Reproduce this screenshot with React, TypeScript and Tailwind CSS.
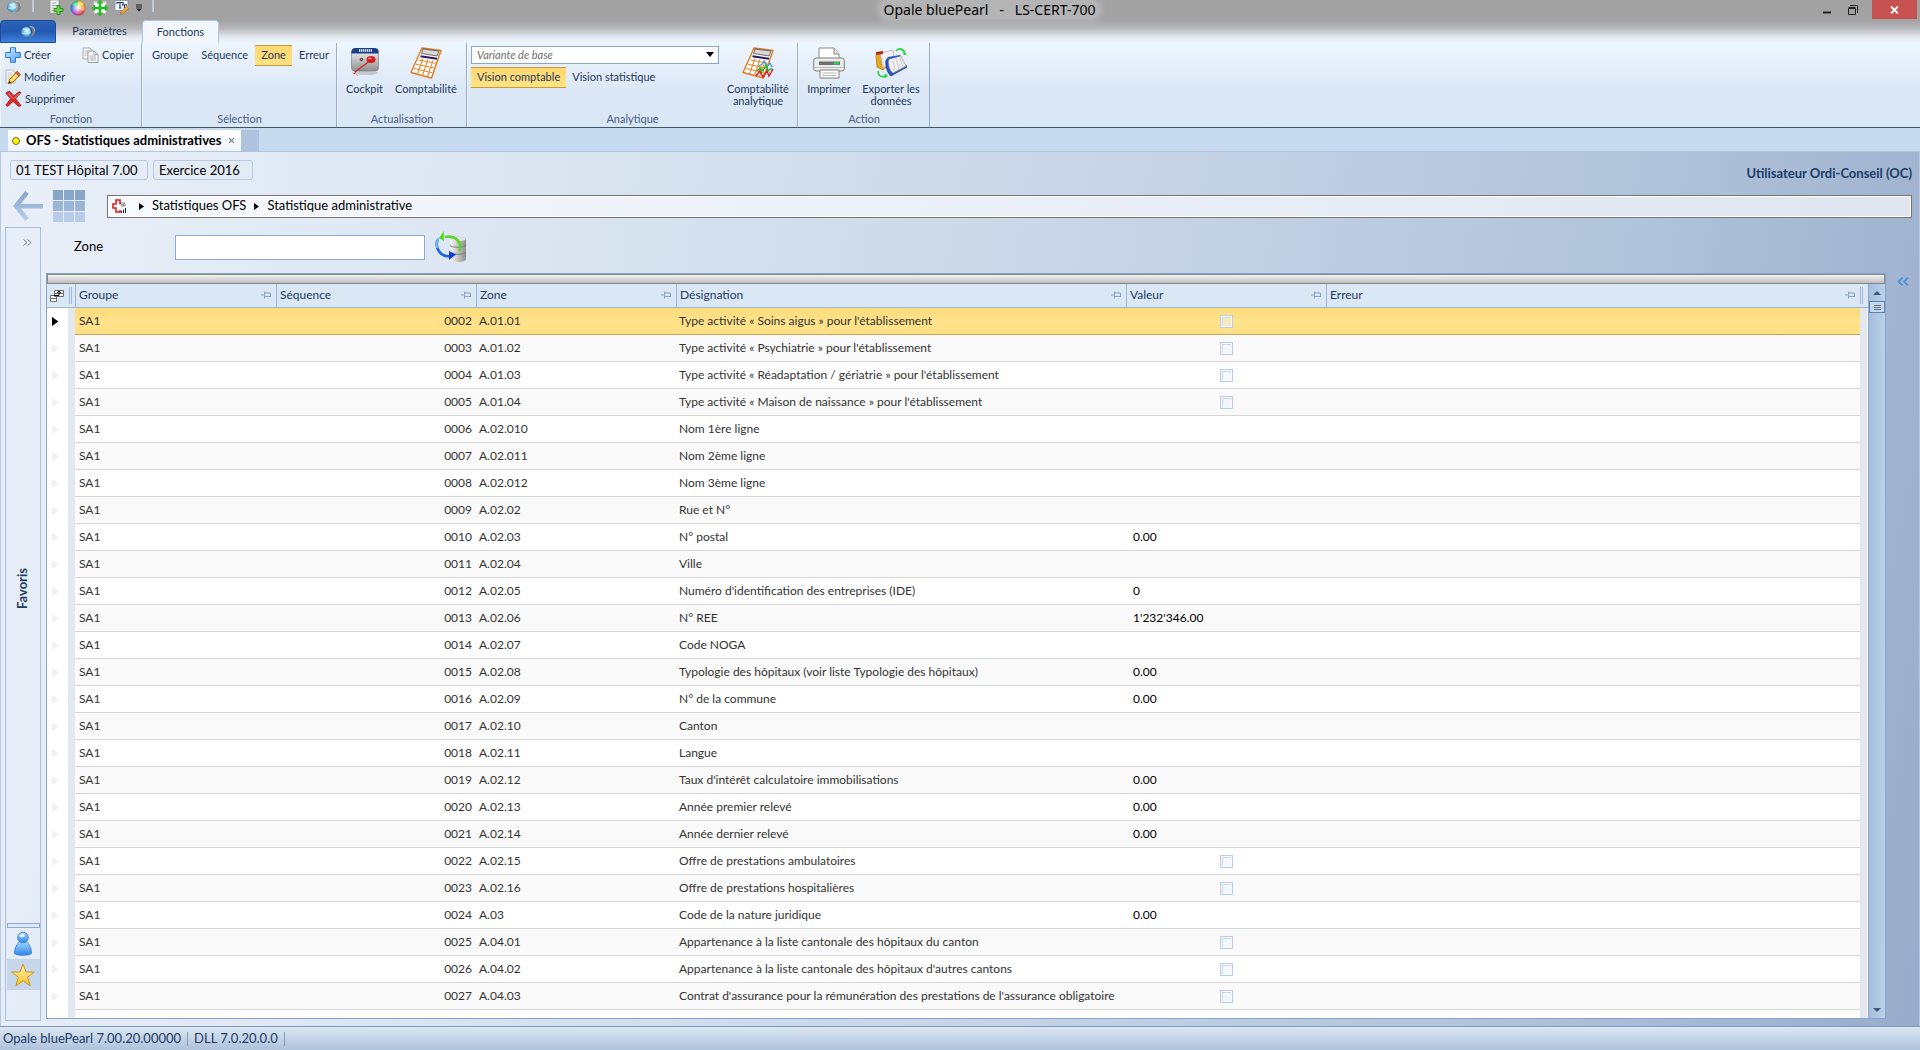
import React from 'react';

type Row = {
  seq: string;
  zone: string;
  label: string;
  value?: string;
  check?: boolean;
};

const rows: Row[] = [
  { seq: '0002', zone: 'A.01.01', label: "Type activité « Soins aigus » pour l'établissement", check: true },
  { seq: '0003', zone: 'A.01.02', label: "Type activité « Psychiatrie » pour l'établissement", check: true },
  { seq: '0004', zone: 'A.01.03', label: "Type activité « Réadaptation / gériatrie » pour l'établissement", check: true },
  { seq: '0005', zone: 'A.01.04', label: "Type activité « Maison de naissance » pour l'établissement", check: true },
  { seq: '0006', zone: 'A.02.010', label: 'Nom 1ère ligne' },
  { seq: '0007', zone: 'A.02.011', label: 'Nom 2ème ligne' },
  { seq: '0008', zone: 'A.02.012', label: 'Nom 3ème ligne' },
  { seq: '0009', zone: 'A.02.02', label: 'Rue et N°' },
  { seq: '0010', zone: 'A.02.03', label: 'N° postal', value: '0.00' },
  { seq: '0011', zone: 'A.02.04', label: 'Ville' },
  { seq: '0012', zone: 'A.02.05', label: "Numéro d'identification des entreprises (IDE)", value: '0' },
  { seq: '0013', zone: 'A.02.06', label: 'N° REE', value: "1'232'346.00" },
  { seq: '0014', zone: 'A.02.07', label: 'Code NOGA' },
  { seq: '0015', zone: 'A.02.08', label: 'Typologie des hôpitaux (voir liste Typologie des hôpitaux)', value: '0.00' },
  { seq: '0016', zone: 'A.02.09', label: 'N° de la commune', value: '0.00' },
  { seq: '0017', zone: 'A.02.10', label: 'Canton' },
  { seq: '0018', zone: 'A.02.11', label: 'Langue' },
  { seq: '0019', zone: 'A.02.12', label: "Taux d'intérêt calculatoire immobilisations", value: '0.00' },
  { seq: '0020', zone: 'A.02.13', label: 'Année premier relevé', value: '0.00' },
  { seq: '0021', zone: 'A.02.14', label: 'Année dernier relevé', value: '0.00' },
  { seq: '0022', zone: 'A.02.15', label: 'Offre de prestations ambulatoires', check: true },
  { seq: '0023', zone: 'A.02.16', label: 'Offre de prestations hospitalières', check: true },
  { seq: '0024', zone: 'A.03', label: 'Code de la nature juridique', value: '0.00' },
  { seq: '0025', zone: 'A.04.01', label: 'Appartenance à la liste cantonale des hôpitaux du canton', check: true },
  { seq: '0026', zone: 'A.04.02', label: "Appartenance à la liste cantonale des hôpitaux d'autres cantons", check: true },
  { seq: '0027', zone: 'A.04.03', label: "Contrat d'assurance pour la rémunération des prestations de l'assurance obligatoire", check: true },
];

const columns = ['Groupe', 'Séquence', 'Zone', 'Désignation', 'Valeur', 'Erreur'];

/* ---------- icons ---------- */

function PearlIcon() {
  return (
    <svg width="16" height="14" viewBox="0 0 16 14">
      <defs>
        <radialGradient id="pearl" cx="0.6" cy="0.4" r="0.6">
          <stop offset="0" stopColor="#e8fbff" />
          <stop offset="0.5" stopColor="#8fd3f2" />
          <stop offset="1" stopColor="#3a86c4" />
        </radialGradient>
      </defs>
      <path d="M9 1c4-.5 6.500 2.500 6 6-.4 3-3 5-6 5 2-1 3.500-2.800 3.500-5.500C12.500 4 11 2 9 1z" fill="#7d7f83" />
      <path d="M10 1.300c3-.2 5 2 4.700 5" fill="none" stroke="#c9cbd0" strokeWidth="0.700" />
      <circle cx="6" cy="7" r="5" fill="url(#pearl)" />
      <path d="M3 4l3 1 3-2M2 8l4 1 4-2" fill="none" stroke="#fff" strokeWidth="0.700" opacity="0.800" />
    </svg>
  );
}

function NewPageIcon() {
  return (
    <svg width="16" height="16" viewBox="0 0 16 16">
      <path d="M2 0h9v13H2z" fill="#fbfbfb" stroke="#8a8a8a" strokeWidth="0.800" />
      <path d="M3.500 3h5M3.500 5.500h6M3.500 8h4M3.500 10.500h3" stroke="#9a9a9a" />
      <path d="M9 5.500h3V8.500h3v3h-3v3H9v-3H6v-3h3z" fill="#6cd04a" stroke="#1f8a1a" strokeWidth="0.900" />
    </svg>
  );
}

function ColorWheelIcon() {
  return (
    <svg width="16" height="16" viewBox="0 0 16 16">
      <defs>
        <radialGradient id="wheel">
          <stop offset="0" stopColor="#fff" />
          <stop offset="1" stopColor="#fff" stopOpacity="0" />
        </radialGradient>
      </defs>
      <path d="M8 8V.5A7.500 7.500 0 0 1 14.500 4.200z" fill="#f5d33a" />
      <path d="M8 8l6.500-3.800a7.500 7.500 0 0 1 0 7.500z" fill="#f7943a" />
      <path d="M8 8l6.500 3.700A7.500 7.500 0 0 1 8 15.500z" fill="#ee3b55" />
      <path d="M8 8v7.500a7.500 7.500 0 0 1-6.500-3.800z" fill="#b344d8" />
      <path d="M8 8l-6.500 3.700a7.500 7.500 0 0 1 0-7.500z" fill="#3d7bf0" />
      <path d="M8 8L1.500 4.200A7.500 7.500 0 0 1 8 .5z" fill="#4fd07a" />
      <circle cx="8" cy="8" r="6.500" fill="url(#wheel)" />
      <circle cx="8" cy="8" r="7.300" fill="none" stroke="#666" strokeWidth="0.500" />
    </svg>
  );
}

function ExpandIcon() {
  return (
    <svg width="16" height="16" viewBox="0 0 16 16">
      <path d="M1.500 1.500h13v12h-13z" fill="#fff" stroke="#909090" strokeWidth="0.600" />
      <path d="M1.500 1.500h13v2h-13z" fill="#d9d9d9" />
      <path d="M8 0l3 3H9v4h4V5l3 3-3 3V9H9v4h2l-3 3-3-3h2V9H3v2L0 8l3-3v2h4V3H5z" fill="#1ecb1e" stroke="#0a8a0a" strokeWidth="0.400" />
    </svg>
  );
}

function FontEditIcon() {
  return (
    <svg width="16" height="16" viewBox="0 0 16 16">
      <path d="M1 .5h13v10H1z" fill="#f3f7fb" stroke="#7f90a8" strokeWidth="0.800" />
      <path d="M3 4V2.500h6V4M6 2.500V8M4.800 8h2.400M8.500 5.800V4.800h4v1M10.500 4.800V8" fill="none" stroke="#233c66" strokeWidth="1.100" />
      <path d="M6.500 14.500l1-3 5-5 2 2-5 5z" fill="#f2a73a" stroke="#9b5a10" strokeWidth="0.600" />
      <path d="M12.500 6.500l1-1 2 2-1 1z" fill="#e58b8b" />
    </svg>
  );
}

function PlusIcon() {
  return (
    <svg width="16" height="16" viewBox="0 0 16 16">
      <defs>
        <linearGradient id="plus" x1="0" y1="0" x2="1" y2="1">
          <stop offset="0" stopColor="#d5f0ff" />
          <stop offset="1" stopColor="#4d9ff0" />
        </linearGradient>
      </defs>
      <path d="M5.500.7h5v4.800h4.800v5h-4.800v4.800h-5v-4.800H.7v-5h4.800z" fill="url(#plus)" stroke="#2f78cf" />
    </svg>
  );
}

function CopyIcon() {
  return (
    <svg width="17" height="16" viewBox="0 0 17 16">
      <path d="M1 1h7l2 2v9H1z" fill="#f6f6f6" stroke="#a9adb2" />
      <path d="M2.500 4h4M2.500 6h4M2.500 8h4" stroke="#b9bcc0" />
      <path d="M6 4h6l4 3.500v8H6z" fill="#fbfbfb" stroke="#9ca0a6" />
      <path d="M12 4v3.500h4M8 9h6M8 11h6M8 13h6" fill="none" stroke="#a9adb2" />
    </svg>
  );
}

function EditIcon() {
  return (
    <svg width="16" height="16" viewBox="0 0 16 16">
      <path d="M1 1h7l2 2v11H1z" fill="#fafafa" stroke="#b6b6b6" />
      <path d="M2.500 4h5M2.500 6h5M2.500 8h4M2.500 10h3" stroke="#c2c2c2" />
      <path d="M3.500 14.500l1-4 6.500-7 3.500 3.200-7 7z" fill="#f7bf3c" stroke="#9a6414" strokeWidth="0.900" />
      <path d="M6 12l6.800-7" stroke="#fff0a8" strokeWidth="1.200" />
      <path d="M10.500 4l1.500-1.800 3.600 3.200-1.500 1.700z" fill="#e2674a" stroke="#9c3f22" strokeWidth="0.700" />
      <path d="M3.500 14.500l.6-2.400 1.800 1.700z" fill="#3a2a14" />
    </svg>
  );
}

function DeleteIcon() {
  return (
    <svg width="17" height="16" viewBox="0 0 17 16">
      <path d="M2 1l3-.5L8.500 5 14 .8l2 .8-5.500 6 5.500 7-2.200.8L8 10.500 2.500 15.500.8 14l5-6.300L1 2.500z" fill="#e02b2b" stroke="#9d1212" strokeWidth="0.800" />
      <path d="M3 2l5 5.500M9 7.500l5-5" stroke="#ff9a8e" strokeWidth="0.900" />
    </svg>
  );
}

function CockpitIcon() {
  return (
    <svg width="32" height="32" viewBox="0 0 32 32">
      <defs>
        <linearGradient id="cock" x1="0" y1="0" x2="0" y2="1">
          <stop offset="0" stopColor="#f4f4f4" />
          <stop offset="1" stopColor="#8f8f8f" />
        </linearGradient>
      </defs>
      <ellipse cx="16" cy="26" rx="13" ry="2" fill="#c3c8cf" />
      <rect x="2.500" y="2" width="27" height="22" rx="3" fill="url(#cock)" stroke="#777" strokeWidth="0.600" />
      <path d="M2.500 5a4 4 0 0 1 4-4h19a4 4 0 0 1 4 4v1.500h-27z" fill="#1c3f86" />
      <path d="M10 3.500h13" stroke="#dfe7f5" strokeWidth="2.600" strokeDasharray="1.400 0.600" />
      <circle cx="12.500" cy="12.500" r="1.800" fill="#555" />
      <circle cx="12.500" cy="12.500" r="0.700" fill="#ddd" />
      <path d="M22 13L6 25l-1 2" stroke="#d42222" strokeWidth="1.300" fill="none" />
      <path d="M5 25l4 4" stroke="#f1a0a0" />
      <ellipse cx="22" cy="12.500" rx="4.500" ry="3.600" fill="#d41c1c" />
      <ellipse cx="21" cy="11.500" rx="1.800" ry="1" fill="#f58080" />
    </svg>
  );
}

function CalculatorIcon({ chart }: { chart?: boolean }) {
  return (
    <svg width="32" height="32" viewBox="0 0 32 32">
      <path d="M12 1l19 2.500-9.500 27.500L1 25.500z" fill="#fff" stroke="#e07a1e" strokeWidth="1.400" strokeLinejoin="round" />
      <path d="M13 2l16 2-1.800 5L11.500 6.500z" fill="#d8d8d8" stroke="#4a4a4a" strokeWidth="0.800" />
      <path d="M10.500 9.200l16.500 2.600" stroke="#2a1660" strokeWidth="2" />
      <path d="M8.500 13l17 3.200M6 17.200l18 3.800M4 21.500l18.500 4.300M13 11.500L7.500 27M18 12.500L12.500 28.500M23 13.500L17.500 29.500" stroke="#e88a32" strokeWidth="1.100" />
      {chart && (
        <>
          <path d="M17 19l3-2 2-3 3 5 3-3 2 4" fill="none" stroke="#3da2e8" strokeWidth="1.300" />
          <path d="M15 24l3-3 3 3 3-6 2 6 4-3" fill="none" stroke="#1fb52a" strokeWidth="1.500" />
          <path d="M14 29l4-5 3 6 4-6 2 5 4-7" fill="none" stroke="#d81e1e" strokeWidth="1.500" />
        </>
      )}
    </svg>
  );
}

function PrinterIcon() {
  return (
    <svg width="32" height="32" viewBox="0 0 32 32">
      <path d="M6 13V1h15l5 6v6z" fill="#fff" stroke="#8a8a8a" />
      <path d="M21 1v6h5" fill="#e4e4e4" stroke="#8a8a8a" />
      <rect x="0.700" y="11" width="30.600" height="13" rx="2.500" fill="#ececec" stroke="#7f7f7f" />
      <rect x="6" y="14.500" width="21" height="3.500" fill="#6f6f6f" />
      <rect x="21" y="15" width="5" height="2.600" fill="#2fd04c" />
      <path d="M1 20.500h30" stroke="#bdbdbd" />
      <path d="M7 23h19v8H7z" fill="#fff" stroke="#7f7f7f" />
      <path d="M9.500 26h14M9.500 28.500h14" stroke="#b5b5b5" />
    </svg>
  );
}

function ExportIcon() {
  return (
    <svg width="32" height="32" viewBox="0 0 32 32">
      <path d="M1 8l5-3 1 13 4 2-3 3-6-3z" fill="#e9a91c" stroke="#a86d0a" strokeWidth="0.700" />
      <path d="M5 6l13-3 1 12-11 6z" fill="#f3f3f3" stroke="#a8a8a8" strokeWidth="0.700" />
      <path d="M1 5l7-1v3l-7 1z" fill="#b22a20" />
      <path d="M11 13l3-2 3 14 14-7 1 2-16 9c-4-3-6-11-5-16z" fill="#2d56c8" stroke="#1b3688" strokeWidth="0.700" />
      <path d="M14 12l12-3 5 10-13 7c-4-3-5-9-4-14z" fill="#efefef" stroke="#9c9c9c" strokeWidth="0.700" />
      <path d="M17 14c2 2 3 6 2 10M21 12l3 10M25 11l3 9" stroke="#c9c9c9" fill="none" />
      <path d="M11 13l15-4-1-1-12 2z" fill="#2d56c8" />
      <path d="M21 4c3-4 8-2 9 3" fill="none" stroke="#25d43c" strokeWidth="1.600" />
      <path d="M28.500 3v5h3z" fill="#25d43c" />
      <path d="M3 24c0 5 4 7 8 5" fill="none" stroke="#25d43c" strokeWidth="1.600" />
      <path d="M9.500 26.500l3.500 2-3.500 3z" fill="#25d43c" />
    </svg>
  );
}

function RefreshDbIcon() {
  return (
    <svg width="32" height="32" viewBox="0 0 32 32">
      <defs>
        <linearGradient id="db" x1="0" x2="1">
          <stop offset="0" stopColor="#fafafa" />
          <stop offset="1" stopColor="#8d8d8d" />
        </linearGradient>
      </defs>
      <path d="M15 8c0-3 16-3 16 0v20c0 4-16 4-16 0z" fill="url(#db)" />
      <path d="M15 14c0 3 16 3 16 0M15 21c0 3 16 3 16 0" fill="none" stroke="#7c7c7c" />
      <ellipse cx="23" cy="8" rx="8" ry="2.200" fill="#e2e2e2" />
      <path d="M24 20c4-8-3-16-14-14" fill="none" stroke="#5ad62b" strokeWidth="2.600" />
      <path d="M9 0v10L4 7z" fill="#5ad62b" />
      <path d="M2.500 9c-3 9 4 18 14 16" fill="none" stroke="#1b63e8" strokeWidth="2.600" />
      <path d="M3.500 7c-2 4-2.500 7-1 10" fill="none" stroke="#6fb8f8" strokeWidth="2" />
      <path d="M14 20l7 3.500-7 5.500z" fill="#0e3ddb" />
    </svg>
  );
}

function PinIcon() {
  return (
    <svg width="10" height="8" viewBox="0 0 10 8" fill="none" stroke="#8ba3c0">
      <path d="M0 4h3.500M3.500.5v7M4 2h5.500v4M4 5.500h5.500" />
    </svg>
  );
}

function HomeCrossIcon() {
  return (
    <svg width="15" height="15" viewBox="0 0 15 15">
      <path d="M9 4.500h-1V1H4v4H1v4h3v4h4v-2" fill="#fff" stroke="#e01b1b" strokeWidth="1.600" />
      <path d="M9 4h4M9 6h5M10 5v3M12 4v4" stroke="#777" strokeWidth="0.800" />
      <path d="M9.500 14v-2M11.500 14v-3.500M13.500 14V9" stroke="#222" />
    </svg>
  );
}

function PersonIcon() {
  return (
    <svg width="20" height="26" viewBox="0 0 20 26">
      <defs>
        <linearGradient id="person" x1="0" y1="0" x2="0" y2="1">
          <stop offset="0" stopColor="#a9d6fb" />
          <stop offset="1" stopColor="#2c86ec" />
        </linearGradient>
      </defs>
      <path d="M1.500 22c0-6 3-9 5-11.500h7c2 2.500 5 5.500 5 11.500 0 3-17 3-17 0z" fill="url(#person)" stroke="#2d7ad0" strokeWidth="0.800" />
      <circle cx="10" cy="6.500" r="5.300" fill="url(#person)" stroke="#2d7ad0" strokeWidth="0.800" />
      <ellipse cx="9" cy="4.500" rx="2.800" ry="1.800" fill="#e4f4ff" />
    </svg>
  );
}

function StarIcon() {
  return (
    <svg width="24" height="24" viewBox="0 0 24 24">
      <defs>
        <linearGradient id="star" x1="0" y1="0" x2="0" y2="1">
          <stop offset="0" stopColor="#fff6b0" />
          <stop offset="1" stopColor="#f5bf2a" />
        </linearGradient>
      </defs>
      <path d="M12 1l3 8h8.300l-6.600 5.200L19.200 23 12 17.800 4.800 23l2.500-8.800L.7 9H9z" fill="url(#star)" stroke="#cf9418" />
    </svg>
  );
}

/* ---------- ribbon ---------- */

function RibbonGroup({ title, width, children }: { title: string; width: string; children: React.ReactNode }) {
  return (
    <section className={`flex flex-col border-r border-[#94afd2] ${width}`}>
      <div className="flex flex-1 border-l border-white/60">{children}</div>
      <div className="h-4 border-l border-white/60 text-center leading-4 text-[#4a5f88]">{title}</div>
    </section>
  );
}

function SmallButton({ icon, label }: { icon: React.ReactNode; label: string }) {
  return (
    <button className="flex h-[22px] items-center gap-[3px]">
      {icon}
      {label}
    </button>
  );
}

function TextButton({ label, active }: { label: string; active?: boolean }) {
  return (
    <button
      className={
        active
          ? 'h-[21px] border-y border-[#c99a3a] bg-gradient-to-b from-[#fdd670] to-[#ffe384] px-[6px]'
          : 'h-[21px] px-[6px]'
      }
    >
      {label}
    </button>
  );
}

function BigButton({ icon, label, width }: { icon: React.ReactNode; label: string; width: string }) {
  return (
    <button className={`flex flex-col items-center pt-1 leading-3 ${width}`}>
      {icon}
      <span className="pt-1">{label}</span>
    </button>
  );
}

function TitleBar() {
  return (
    <div className="flex h-5 items-start">
      <div className="flex flex-1 items-start gap-[10px] pl-[6px]">
        <PearlIcon />
        <span className="h-3 w-[2px] bg-[#c4cad2]" />
        <div className="ml-1 flex gap-[6px]">
          <NewPageIcon />
          <ColorWheelIcon />
          <ExpandIcon />
          <FontEditIcon />
        </div>
        <svg className="mt-1 -ml-1" width="6" height="8" viewBox="0 0 6 8">
          <path d="M0 1h6M0 3h6" stroke="#222" />
          <path d="M0 4.500h6l-3 3z" fill="#222" />
        </svg>
        <span className="h-3 w-[2px] bg-[#c4cad2]" />
      </div>
      <h1 className="ml-14 rounded-lg bg-white/20 px-1 font-['Noto_Sans',sans-serif] text-[14px] leading-[19px] whitespace-pre text-black shadow-[0_0_6px_3px_rgba(255,255,255,0.2)]">
        Opale bluePearl   -   LS-CERT-700
      </h1>
      <div className="flex flex-1 justify-end pr-[3px]">
        <button aria-label="Réduire" className="flex h-[19px] w-[26px] items-center justify-center">
          <svg width="8" height="8" viewBox="0 0 8 8">
            <path d="M0 5.500h8v2H0z" fill="#222" />
          </svg>
        </button>
        <button aria-label="Restaurer" className="flex h-[19px] w-[26px] items-center justify-center">
          <svg width="10" height="10" viewBox="0 0 10 10" fill="none" stroke="#222">
            <path d="M2 .5h7.500V8M.5 3.500h7v6h-7zM.5 2.500h7" />
          </svg>
        </button>
        <button aria-label="Fermer" className="ml-[6px] flex h-[19px] w-[45px] items-center justify-center bg-[#c75050]">
          <svg width="9" height="8" viewBox="0 0 9 8">
            <path d="M1 .5l7 7M8 .5l-7 7" stroke="#fff" strokeWidth="1.800" />
          </svg>
        </button>
      </div>
    </div>
  );
}

function Ribbon() {
  return (
    <header className="border-b border-[#3f5669] bg-[linear-gradient(to_bottom,#a2a2a2_0px,#a2a2a2_20px,#b4b6b9_28px,#e4e9ef_37px,#eef6fe_43px,#dce8f6_90px,#d9e6f4_127px)] text-[11px] text-[#1e395b]">
      <TitleBar />
      <nav className="flex h-[23px]">
        <button
          aria-label="Application"
          className="flex w-14 items-center justify-center rounded-t-sm border border-[#1d4b9b] bg-gradient-to-b from-[#2a63b8] via-[#2459b0] to-[#3f82dc]"
        >
          <PearlIcon />
        </button>
        <button className="w-[86px] pl-px text-center">Paramètres</button>
        <button className="w-[77px] rounded-t-sm border border-b-0 border-[#a9c4e4] bg-[#f3f8fe]">Fonctions</button>
      </nav>
      <div className="flex h-[84px]">
        <RibbonGroup title="Fonction" width="w-[142px]">
          <div className="flex flex-1 justify-between pr-[7px] pl-1">
            <div className="flex flex-col pt-px">
              <SmallButton icon={<PlusIcon />} label="Créer" />
              <SmallButton icon={<EditIcon />} label="Modifier" />
              <SmallButton icon={<DeleteIcon />} label="Supprimer" />
            </div>
            <div className="-ml-8 pt-px">
              <SmallButton icon={<CopyIcon />} label="Copier" />
            </div>
          </div>
        </RibbonGroup>
        <RibbonGroup title="Sélection" width="w-[195px]">
          <div className="flex flex-1 items-start justify-between pt-[2px] pr-px pl-[3px]">
            <TextButton label="Groupe" />
            <TextButton label="Séquence" />
            <TextButton label="Zone" active />
            <TextButton label="Erreur" />
          </div>
        </RibbonGroup>
        <RibbonGroup title="Actualisation" width="w-[130px]">
          <BigButton icon={<CockpitIcon />} label="Cockpit" width="w-[53px]" />
          <BigButton icon={<CalculatorIcon />} label="Comptabilité" width="w-[70px]" />
        </RibbonGroup>
        <RibbonGroup title="Analytique" width="w-[331px]">
          <div className="flex flex-1 flex-col gap-[3px] pt-[3px] pl-[3px]">
            <div className="relative w-[248px]">
              <select
                aria-label="Variante"
                className="block h-[18px] w-full appearance-none border border-[#88a6d0] bg-white px-[5px] text-[11px] leading-3 text-[#6f6f6f] italic"
              >
                <option>Variante de base</option>
              </select>
              <svg className="absolute top-[6px] right-[5px]" width="8" height="5" viewBox="0 0 8 5">
                <path d="M0 0h8L4 5z" fill="#000" />
              </svg>
            </div>
            <div className="flex">
              <TextButton label="Vision comptable" active />
              <TextButton label="Vision statistique" />
            </div>
          </div>
          <BigButton icon={<CalculatorIcon chart />} label="Comptabilité analytique" width="w-[82px]" />
        </RibbonGroup>
        <RibbonGroup title="Action" width="w-[132px]">
          <BigButton icon={<PrinterIcon />} label="Imprimer" width="w-[60px]" />
          <BigButton icon={<ExportIcon />} label="Exporter les données" width="w-16" />
        </RibbonGroup>
      </div>
    </header>
  );
}

/* ---------- page ---------- */

function DocumentTabs() {
  return (
    <div className="flex h-6 items-end border-b border-[#b1c6df] bg-[#c7d9ee] pl-2 text-[13px]">
      <div className="flex h-[21px] items-center bg-gradient-to-b from-white to-[#eef4fb] px-1">
        <span className="mr-[6px] size-2 rounded-full border border-[#6c6c3a] bg-[#fbf400]" />
        <span className="font-bold text-black">OFS - Statistiques administratives</span>
        <button aria-label="Fermer l'onglet" className="mr-[3px] ml-[7px]">
          <svg width="5" height="5" viewBox="0 0 5 5">
            <path d="M0 0l5 5M5 0L0 5" stroke="#8d8d8d" strokeWidth="1.300" />
          </svg>
        </button>
      </div>
      <div className="h-[21px] w-[18px] bg-[#afc3df]" />
    </div>
  );
}

function ContextBar() {
  return (
    <div className="flex items-start justify-between pt-2">
      <div className="flex gap-[5px] text-[13px] text-black">
        <span className="h-5 w-[138px] rounded-[3px] border border-[#b3cae8] px-[5px] leading-[18px]">01 TEST Hôpital 7.00</span>
        <span className="h-5 w-[100px] rounded-[3px] border border-[#b3cae8] px-[5px] leading-[18px]">Exercice 2016</span>
      </div>
      <span className="pt-1 text-[13px] leading-[18px] font-bold text-[#203d68]">Utilisateur Ordi-Conseil (OC)</span>
    </div>
  );
}

function Breadcrumb() {
  const arrow = (
    <svg width="5" height="7" viewBox="0 0 5 7">
      <path d="M0 0l5 3.500L0 7z" fill="#000" />
    </svg>
  );
  return (
    <div className="flex items-center pt-2">
      <button aria-label="Retour" className="pl-[3px]">
        <svg width="30" height="30" viewBox="0 0 30 30">
          <defs>
            <linearGradient id="back" gradientUnits="userSpaceOnUse" x1="0" y1="0" x2="0" y2="30">
              <stop offset="0" stopColor="#84a4ca" />
              <stop offset="1" stopColor="#b9cfe9" />
            </linearGradient>
          </defs>
          <path d="M14 1.500L3 15l11 13.500" fill="none" stroke="url(#back)" strokeWidth="4.500" />
          <path d="M3 13h27v4.500H3z" fill="url(#back)" />
        </svg>
      </button>
      <button aria-label="Menu" className="ml-[10px]">
        <svg width="32" height="32" viewBox="0 0 32 32">
          <path d="M0 0h10v10H0zM11 0h10v10H11zM22 0h10v10H22z" fill="#88a5ca" />
          <path d="M0 11h10v10H0zM11 11h10v10H11zM22 11h10v10H22z" fill="#9bb6d9" />
          <path d="M0 22h10v10H0zM11 22h10v10H11zM22 22h10v10H22z" fill="#b6cce8" />
        </svg>
      </button>
      <nav className="ml-[22px] flex h-[23px] flex-1 items-center gap-2 border border-[#757575] bg-[linear-gradient(100deg,#f6f9fd,#dfe6f0)] pl-1 text-[13px] text-black shadow-[inset_0_0_0_1px_#fff]">
        <HomeCrossIcon />
        <span className="pl-1">{arrow}</span>
        <a href="#ofs">Statistiques OFS</a>
        {arrow}
        <a href="#admin">Statistique administrative</a>
      </nav>
    </div>
  );
}

function FavoritesPanel() {
  return (
    <aside className="flex w-9 flex-col items-center border border-[#a9c0dd] bg-[#e6edf7]/60 pb-[30px]">
      <button aria-label="Développer" className="mt-[11px] ml-2">
        <svg width="9" height="7" viewBox="0 0 9 7" fill="none" stroke="#7d838c">
          <path d="M.5.5l3.500 3-3.500 3M4.500.5l3.500 3-3.500 3" />
        </svg>
      </button>
      <div className="flex flex-1 items-center justify-center pt-2">
        <span className="rotate-180 text-[13px] font-bold text-[#1f3c66] [writing-mode:vertical-rl]">Favoris</span>
      </div>
      <div className="h-[5px] w-[33px] border border-[#8eacd3] bg-[#dfe9f5]" />
      <button aria-label="Utilisateur" className="flex h-[31px] w-[33px] items-center justify-center">
        <PersonIcon />
      </button>
      <button aria-label="Favoris" className="flex h-[31px] w-[33px] items-center justify-center bg-[#c6d7ec]">
        <StarIcon />
      </button>
    </aside>
  );
}

function DataTable() {
  return (
    <table className="w-full table-fixed border-separate border-spacing-0 bg-white text-[12px] leading-4 text-[#333]">
      <colgroup>
        <col className="w-[21px]" />
        <col className="w-[7px]" />
        <col className="w-[201px]" />
        <col className="w-[200px]" />
        <col className="w-[200px]" />
        <col className="w-[450px]" />
        <col className="w-[200px]" />
        <col />
        <col className="w-2" />
      </colgroup>
      <thead>
        <tr className="h-6 bg-[#dae7f5] text-left text-[#1f3a63]">
          <th colSpan={2} className="border-b border-[#9db5d6] p-0">
            <div className="flex items-center gap-[5px] pl-[3px]">
              <svg width="14" height="14" viewBox="0 0 14 14" fill="#fff" stroke="#6d6d6d">
                <path d="M4.500 1.500h9v3h-9zM4.500 4.500h9v3h-9zM.5 6.500h6v3h-6zM.5 9.500h6v3h-6z" />
                <path d="M4 6.500h5V2M7 4l2-2 2 2" fill="none" stroke="#000" />
              </svg>
              <span className="h-[17px] w-[3px] border-x border-[#a5bad6]" />
            </div>
          </th>
          {columns.map((name) => (
            <th key={name} scope="col" className="border-b border-l border-[#9db5d6] px-[3px] pt-0 pb-px font-normal">
              <div className="flex items-center justify-between pr-[2px]">
                {name}
                <PinIcon />
              </div>
            </th>
          ))}
          <th className="border-b border-[#9db5d6] p-0">
            <div className="h-[17px] w-[3px] border-x border-[#a5bad6]" />
          </th>
        </tr>
      </thead>
      <tbody>
        {rows.map((row, i) => {
          const selected = i === 0;
          const cell = selected
            ? 'border-b border-[#c7a45c] py-0 bg-gradient-to-b from-[#fddb7b] via-[#ffe28a] to-[#fddf85]'
            : i % 2
              ? 'border-b border-[#d6d6d6] py-0 bg-[#fafafa]'
              : 'border-b border-[#d6d6d6] py-0 bg-white';
          return (
            <tr key={row.seq} className="h-[27px] whitespace-nowrap">
              <td className="p-0 pl-[5px]">
                <svg width="7" height="9" viewBox="0 0 7 9">
                  <path d="M0 0l6.500 4.500L0 9z" fill={selected ? '#000' : '#f0f0f0'} />
                </svg>
              </td>
              <td className="bg-[#e2e7f0] p-0" />
              <td className={`${cell} pl-1`}>SA1</td>
              <td className={`${cell} pr-1 text-right`}>{row.seq}</td>
              <td className={`${cell} pl-[3px]`}>{row.zone}</td>
              <td className={`${cell} pl-[3px]`}>{row.label}</td>
              <td className={`${cell} px-[7px] text-black`}>
                {row.check ? (
                  <input
                    type="checkbox"
                    aria-label={row.label}
                    className="mx-auto block size-[13px] appearance-none border border-[#b9cde6] bg-[#eef3fa]/50 shadow-[inset_0_0_0_1px_#f5f8fc,inset_2px_2px_0_0_#ccd9e9]"
                  />
                ) : (
                  row.value
                )}
              </td>
              <td className={cell} />
              <td className="border-r border-white bg-[#e2e7f0] p-0" />
            </tr>
          );
        })}
        <tr className="h-[27px]">
          <td />
          <td className="bg-[#e2e7f0]" />
          <td colSpan={6} />
          <td className="border-r border-white bg-[#e2e7f0]" />
        </tr>
      </tbody>
    </table>
  );
}

function ScrollBar() {
  return (
    <div className="flex w-[17px] flex-col border-l border-[#8ea9cd] bg-gradient-to-r from-[#a4bedc] to-[#bcd1e9]">
      <button aria-label="Défiler vers le haut" className="flex h-[17px] items-center justify-center">
        <svg width="8" height="4" viewBox="0 0 8 4">
          <path d="M0 4l4-4 4 4z" fill="#3f5680" />
        </svg>
      </button>
      <div className="flex h-3 flex-col items-center justify-center gap-px border border-[#5f80b2] bg-[#c6d8ee]">
        <span className="h-px w-[7px] bg-[#66707e]" />
        <span className="h-px w-[7px] bg-[#66707e]" />
        <span className="h-px w-[7px] bg-[#66707e]" />
      </div>
      <div className="flex-1" />
      <button aria-label="Défiler vers le bas" className="flex h-[17px] items-center justify-center">
        <svg width="8" height="4" viewBox="0 0 8 4">
          <path d="M0 0l4 4 4-4z" fill="#3f5680" />
        </svg>
      </button>
    </div>
  );
}

export default function App() {
  return (
    <div className="flex h-screen flex-col overflow-hidden font-['Lato',sans-serif]">
      <Ribbon />
      <DocumentTabs />
      <main className="flex min-h-0 flex-1 flex-col border-x border-[#b5c8e0] bg-[linear-gradient(100deg,#e9eff8_0%,#dce6f2_25%,#c9d6e7_52%,#b1c3da_80%,#98abca_100%)]">
        <div className="pr-[7px] pl-[9px]">
          <ContextBar />
          <Breadcrumb />
        </div>
        <div className="flex min-h-0 flex-1 gap-[5px] pt-[5px] pb-[5px] pl-1">
          <FavoritesPanel />
          <div className="flex min-w-0 flex-1 flex-col">
            <div className="flex items-center pt-1 pl-7 text-[13px] text-black">
              <label htmlFor="zone" className="w-[101px]">
                Zone
              </label>
              <input id="zone" type="text" className="h-[25px] w-[250px] border border-[#8eaad2] bg-white px-1" />
              <button aria-label="Actualiser" className="ml-[10px]">
                <RefreshDbIcon />
              </button>
            </div>
            <div className="mt-[10px] mb-[2px] flex min-h-0 flex-1 flex-col border border-[#86a4cd]">
              <div className="h-[10px] shrink-0 border border-[#878787] bg-gradient-to-b from-[#f4f4f4] to-[#bdbdbd]" />
              <div className="flex min-h-0 flex-1">
                <div className="min-w-0 flex-1 overflow-hidden bg-white">
                  <DataTable />
                </div>
                <ScrollBar />
              </div>
            </div>
          </div>
          <button aria-label="Afficher le panneau" className="mt-[50px] mr-[10px] ml-[6px] self-start">
            <svg width="12" height="9" viewBox="0 0 12 9" fill="none" stroke="#4c94e0" strokeWidth="1.800">
              <path d="M5.500.5l-4 4 4 4M11 .5l-4 4 4 4" />
            </svg>
          </button>
        </div>
      </main>
      <footer className="flex h-6 items-center gap-[6px] border-t border-[#7e9cc2] bg-gradient-to-b from-[#dbe7f2] to-[#afc2db] pl-[3px] text-[13px] text-[#1e3c68]">
        <span>Opale bluePearl 7.00.20.00000</span>
        <span className="h-[14px] w-px bg-[#8f9cae]" />
        <span>DLL 7.0.20.0.0</span>
        <span className="h-[14px] w-px bg-[#8f9cae]" />
      </footer>
    </div>
  );
}
